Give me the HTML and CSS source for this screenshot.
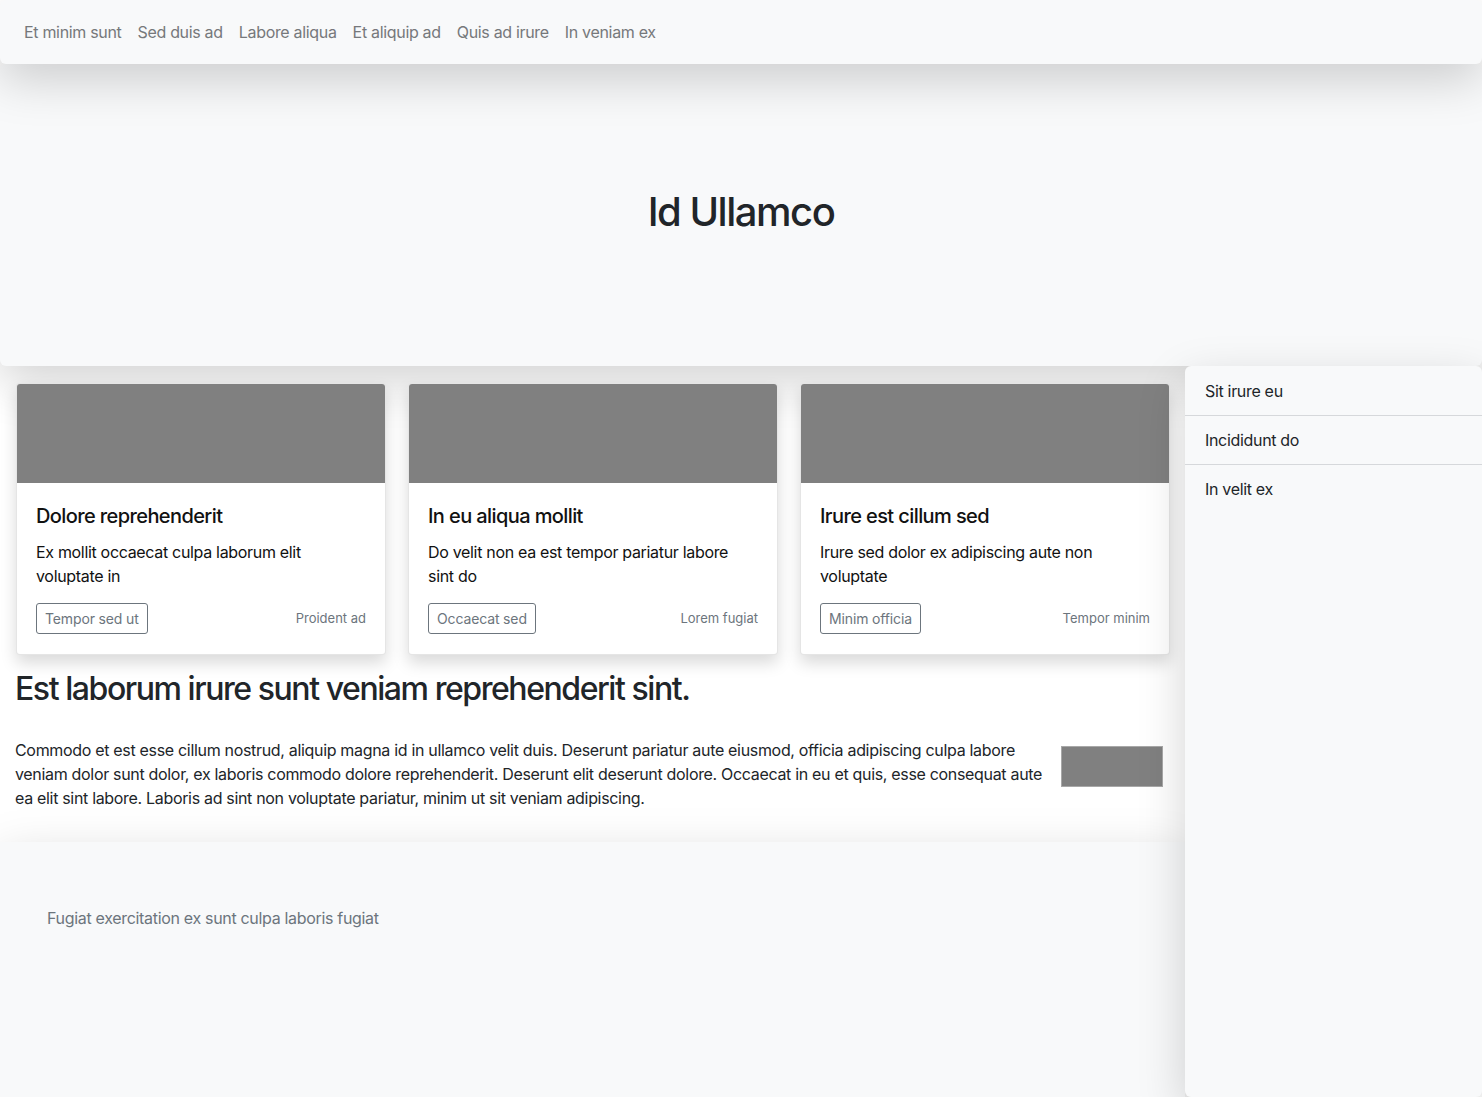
FILE: index.html
```html
<!DOCTYPE html>
<html lang="la">
<head>
<meta charset="utf-8">
<title>Id Ullamco</title>
<link rel="stylesheet" href="styles.css">
</head>
<body>
<nav class="navbar">
  <a class="nav-link" href="#">Et minim sunt</a>
  <a class="nav-link" href="#">Sed duis ad</a>
  <a class="nav-link" href="#">Labore aliqua</a>
  <a class="nav-link" href="#">Et aliquip ad</a>
  <a class="nav-link" href="#">Quis ad irure</a>
  <a class="nav-link" href="#">In veniam ex</a>
</nav>
<header class="hero">
  <h1 class="hero-title">Id Ullamco</h1>
</header>
<div class="layout">
  <main class="main">
    <section class="cards">
      <article class="card">
        <div class="card-img"></div>
        <div class="card-body">
          <h5 class="card-title">Dolore reprehenderit</h5>
          <p class="card-text">Ex mollit occaecat culpa laborum elit voluptate in</p>
          <div class="card-foot">
            <span class="tag">Tempor sed ut</span>
            <small class="meta">Proident ad</small>
          </div>
        </div>
      </article>
      <article class="card">
        <div class="card-img"></div>
        <div class="card-body">
          <h5 class="card-title">In eu aliqua mollit</h5>
          <p class="card-text">Do velit non ea est tempor pariatur labore sint do</p>
          <div class="card-foot">
            <span class="tag">Occaecat sed</span>
            <small class="meta">Lorem fugiat</small>
          </div>
        </div>
      </article>
      <article class="card">
        <div class="card-img"></div>
        <div class="card-body">
          <h5 class="card-title">Irure est cillum sed</h5>
          <p class="card-text">Irure sed dolor ex adipiscing aute non voluptate</p>
          <div class="card-foot">
            <span class="tag">Minim officia</span>
            <small class="meta">Tempor minim</small>
          </div>
        </div>
      </article>
    </section>
    <section class="article">
      <h2 class="article-title">Est laborum irure sunt veniam reprehenderit sint.</h2>
      <div class="article-row">
        <p class="article-text">Commodo et est esse cillum nostrud, aliquip magna id in ullamco velit duis. Deserunt pariatur aute eiusmod, officia adipiscing culpa labore veniam dolor sunt dolor, ex laboris commodo dolore reprehenderit. Deserunt elit deserunt dolore. Occaecat in eu et quis, esse consequat aute ea elit sint labore. Laboris ad sint non voluptate pariatur, minim ut sit veniam adipiscing.</p>
        <div class="article-img"></div>
      </div>
    </section>
    <footer class="footer">
      <p class="footer-text">Fugiat exercitation ex sunt culpa laboris fugiat</p>
    </footer>
  </main>
  <aside class="sidebar">
    <a class="side-item" href="#">Sit irure eu</a>
    <a class="side-item" href="#">Incididunt do</a>
    <a class="side-item" href="#">In velit ex</a>
  </aside>
</div>
</body>
</html>
```
FILE: styles.css
```css
* { box-sizing: border-box; }

html, body {
  margin: 0;
  padding: 0;
}

body {
  font-family: Inter, "Noto Sans", "Liberation Sans", sans-serif;
  font-size: 16px;
  line-height: 1.5;
  letter-spacing: -0.02em;
  color: #212529;
  background: #fff;
}

a { text-decoration: none; }

.navbar {
  position: relative;
  z-index: 2;
  display: flex;
  align-items: center;
  height: 64px;
  padding: 0 16px;
  background: #f8f9fa;
  border-radius: 6px;
  box-shadow: 0 1rem 3rem rgba(0, 0, 0, .175);
}

.nav-link {
  padding: 8px;
  color: #76787b;
  font-size: 16px;
  letter-spacing: -0.02em;
}

.hero {
  height: 302px;
  padding-top: 124px;
  background: #f8f9fa;
  border-radius: 6px;
  box-shadow: 0 1rem 3rem rgba(0, 0, 0, .175);
  text-align: center;
}

.hero-title {
  margin: 0;
  font-size: 40px;
  font-weight: 500;
  line-height: 1.2;
  letter-spacing: -0.037em;
  color: #212529;
}

.layout {
  display: flex;
  min-height: calc(100vh - 366px);
}

.main {
  flex: 1;
  display: flex;
  flex-direction: column;
}

.cards {
  display: grid;
  grid-template-columns: repeat(3, 1fr);
  gap: 22px;
  padding: 17px 15px 0 16px;
}

.card {
  background: #fff;
  border: 1px solid rgba(0, 0, 0, .1);
  border-radius: 4px;
  overflow: hidden;
  box-shadow: 0 .5rem 1rem rgba(0, 0, 0, .15);
}

.card-img {
  height: 99px;
  background: #808080;
}

.card-body {
  padding: 21px 19px 20px 19px;
}

.card-title {
  margin: 0 0 12px;
  font-size: 20px;
  font-weight: 500;
  line-height: 1.2;
  letter-spacing: -0.03em;
  color: #111;
}

.card-text {
  margin: 0 0 15px;
  color: #111;
}

.card-foot {
  display: flex;
  align-items: center;
  justify-content: space-between;
}

.tag {
  display: inline-block;
  padding: 4px 8px;
  font-size: 14px;
  line-height: 21px;
  letter-spacing: -0.01em;
  color: #6c757d;
  border: 1px solid #6c757d;
  border-radius: 3px;
}

.meta {
  font-size: 13px;
  letter-spacing: 0;
  color: #6c757d;
}

.article {
  padding: 15px 22px 32px 15px;
}

.article-title {
  margin: 0 0 30px;
  font-size: 32px;
  font-weight: 500;
  line-height: 1.2;
  letter-spacing: -0.045em;
  color: #212529;
}

.article-row {
  display: flex;
  align-items: flex-start;
  gap: 18px;
}

.article-text {
  flex: 1;
  margin: 0;
}

.article-img {
  width: 102px;
  height: 41px;
  margin-top: 8px;
  background: #808080;
  border: 1px solid #a8a8a8;
}

.footer {
  flex: 1;
  padding: 64px 47px 63px;
  background: #f8f9fa;
  box-shadow: 0 1rem 3rem rgba(0, 0, 0, .175);
}

.footer-text {
  margin: 0;
  color: #6c757d;
}

.sidebar {
  width: 297px;
  flex: none;
  display: flex;
  flex-direction: column;
  padding-top: 1px;
  background: #f8f9fa;
  border-radius: 6px;
  box-shadow: 0 1rem 3rem rgba(0, 0, 0, .175);
}

.side-item {
  padding: 12px 20px;
  color: #212529;
  border-bottom: 1px solid #d6d8db;
}

.side-item:last-child {
  border-bottom: 0;
}
```
